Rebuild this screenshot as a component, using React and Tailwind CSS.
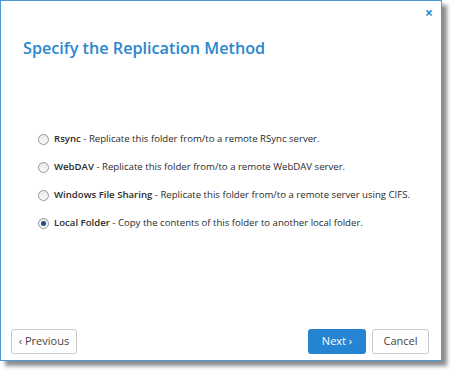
const options = [
  { name: 'Rsync', desc: 'Replicate this folder from/to a remote RSync server.' },
  { name: 'WebDAV', desc: 'Replicate this folder from/to a remote WebDAV server.' },
  { name: 'Windows File Sharing', desc: 'Replicate this folder from/to a remote server using CIFS.' },
  { name: 'Local Folder', desc: 'Copy the contents of this folder to another local folder.', checked: true },
]

const Radio = ({ checked }) => (
  <span className="relative inline-block w-[11px] h-[11px] rounded-full border border-[#9a9a9a] bg-gradient-to-b from-[#e8e8e8] to-[#fbfbfb] shrink-0">
    {checked && (
      <span className="absolute left-[2px] top-[2px] w-[5px] h-[5px] rounded-full bg-[#1c4f8c]"></span>
    )}
  </span>
)

export default function App() {
  return (
    <div className="w-[452px] h-[374px] bg-white" style={{ fontFamily: '"Open Sans", sans-serif' }}>
      <div className="relative w-[442px] h-[361px] border border-[#4a9ad6] bg-white shadow-[5px_5px_4px_rgba(0,0,0,0.45)] flex flex-col">
        <button className="absolute right-[8px] top-[5px] text-[#2a8ad4] text-[14px] font-bold leading-none">×</button>
        <h1 className="mt-[35px] ml-[22px] text-[16.2px] font-semibold text-[#2a86cf] leading-[24px] whitespace-nowrap">Specify the Replication Method</h1>
        <div className="mt-[71px] ml-[37px] flex flex-col gap-[12px]">
          {options.map((o) => (
            <div key={o.name} className="flex items-center gap-[5px] h-[16px] text-[9.6px] text-[#2b2b2b] whitespace-nowrap">
              <Radio checked={o.checked} />
              <span>
                <span className="font-semibold">{o.name}</span> - {o.desc}
              </span>
            </div>
          ))}
        </div>
        <div className="mt-auto mb-[6px] ml-[10px] mr-[12px] flex items-center">
          <button className="h-[25px] w-[66px] rounded-[3px] border border-[#c8c8c8] bg-white text-[11px] text-[#444]">‹ Previous</button>
          <div className="ml-auto flex gap-[6px]">
            <button className="h-[25px] w-[58px] rounded-[3px] bg-[#2685d2] text-white text-[11px]">Next ›</button>
            <button className="h-[25px] w-[57px] rounded-[3px] border border-[#c8c8c8] bg-white text-[11px] text-[#444]">Cancel</button>
          </div>
        </div>
      </div>
    </div>
  )
}
